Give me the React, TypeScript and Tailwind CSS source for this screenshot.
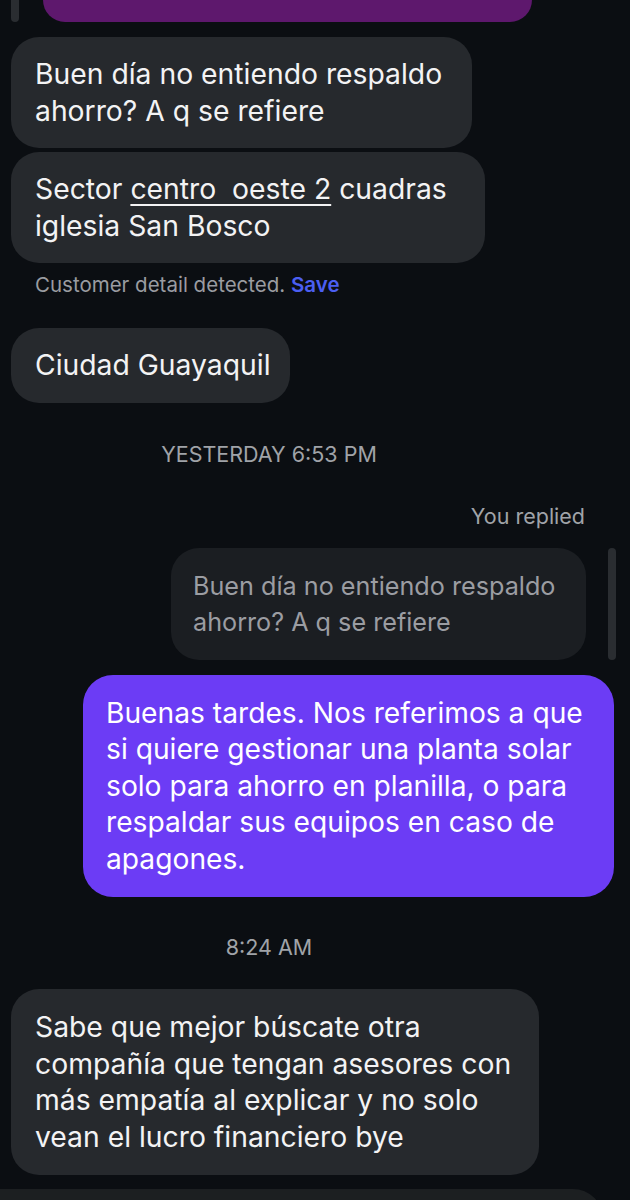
import React from "react";

const bubble =
  "rounded-[28px] bg-[#26292d] px-[24px] py-[19px] text-[28.3px] leading-[36.5px] text-[#f3f3f4] whitespace-nowrap";

const label = "text-[21.5px] leading-[26px] text-[#a0a3a8]";

export default function App() {
  return (
    <div className="h-[1200px] w-[630px] overflow-hidden bg-[#0b0e12] font-['Inter',sans-serif]">
      <div className="flex h-[22px]">
        <div className="ml-[11px] h-[22px] w-[8px] rounded-b-full bg-[#2a2d31]" />
        <div className="ml-[24px] h-[22px] w-[489px] rounded-b-[30px] bg-[#5e186d]" />
      </div>

      <div className="flex flex-col items-start pl-[11px]">
        <div className={`${bubble} mt-[15px] w-[461px]`}>
          Buen día no entiendo respaldo
          <br />
          ahorro? A q se refiere
        </div>
        <div className={`${bubble} mt-[4px] w-[474px]`}>
          Sector{" "}
          <span className="whitespace-pre underline decoration-2 underline-offset-[5px]">
            centro  oeste 2
          </span>{" "}
          cuadras
          <br />
          iglesia San Bosco
        </div>
        <p className="mt-[10px] pl-[24px] text-[20.5px] leading-[24px] text-[#9a9ca1]">
          Customer detail detected.{" "}
          <span className="font-semibold text-[#4b5ff2]">Save</span>
        </p>
        <div className={`${bubble} mt-[31px] w-[279px]`}>Ciudad Guayaquil</div>
      </div>

      <div className={`${label} mt-[38px] pr-[92px] text-center`}>
        YESTERDAY 6:53 PM
      </div>

      <div className={`${label} mt-[36px] pr-[45px] text-right`}>You replied</div>

      <div className="mt-[19px] flex justify-end pr-[14px]">
        <div className="w-[415px] whitespace-nowrap rounded-[28px] bg-[#1b1e22] px-[22px] py-[20px] text-[25.2px] leading-[36px] text-[#9b9da2]">
          Buen día no entiendo respaldo
          <br />
          ahorro? A q se refiere
        </div>
        <div className="ml-[22px] w-[8px] rounded-full bg-[#2a2d31]" />
      </div>

      <div className="mt-[15px] flex justify-end pr-[16px]">
        <div className="w-[531px] whitespace-nowrap rounded-[30px] bg-[#6c3cf5] px-[23px] py-[20px] text-[28.2px] leading-[36.5px] text-white">
          Buenas tardes. Nos referimos a que
          <br />
          si quiere gestionar una planta solar
          <br />
          solo para ahorro en planilla, o para
          <br />
          respaldar sus equipos en caso de
          <br />
          apagones.
        </div>
      </div>

      <div className={`${label} mt-[37px] pr-[92px] text-center`}>8:24 AM</div>

      <div className="flex flex-col items-start pl-[11px]">
        <div className={`${bubble} mt-[29px] w-[528px] py-[20px]`}>
          Sabe que mejor búscate otra
          <br />
          compañía que tengan asesores con
          <br />
          más empatía al explicar y no solo
          <br />
          vean el lucro financiero bye
        </div>
      </div>

      <div className="mt-[14px] h-[60px] w-[603px] rounded-tr-[30px] bg-[#1c1f21]" />
    </div>
  );
}
